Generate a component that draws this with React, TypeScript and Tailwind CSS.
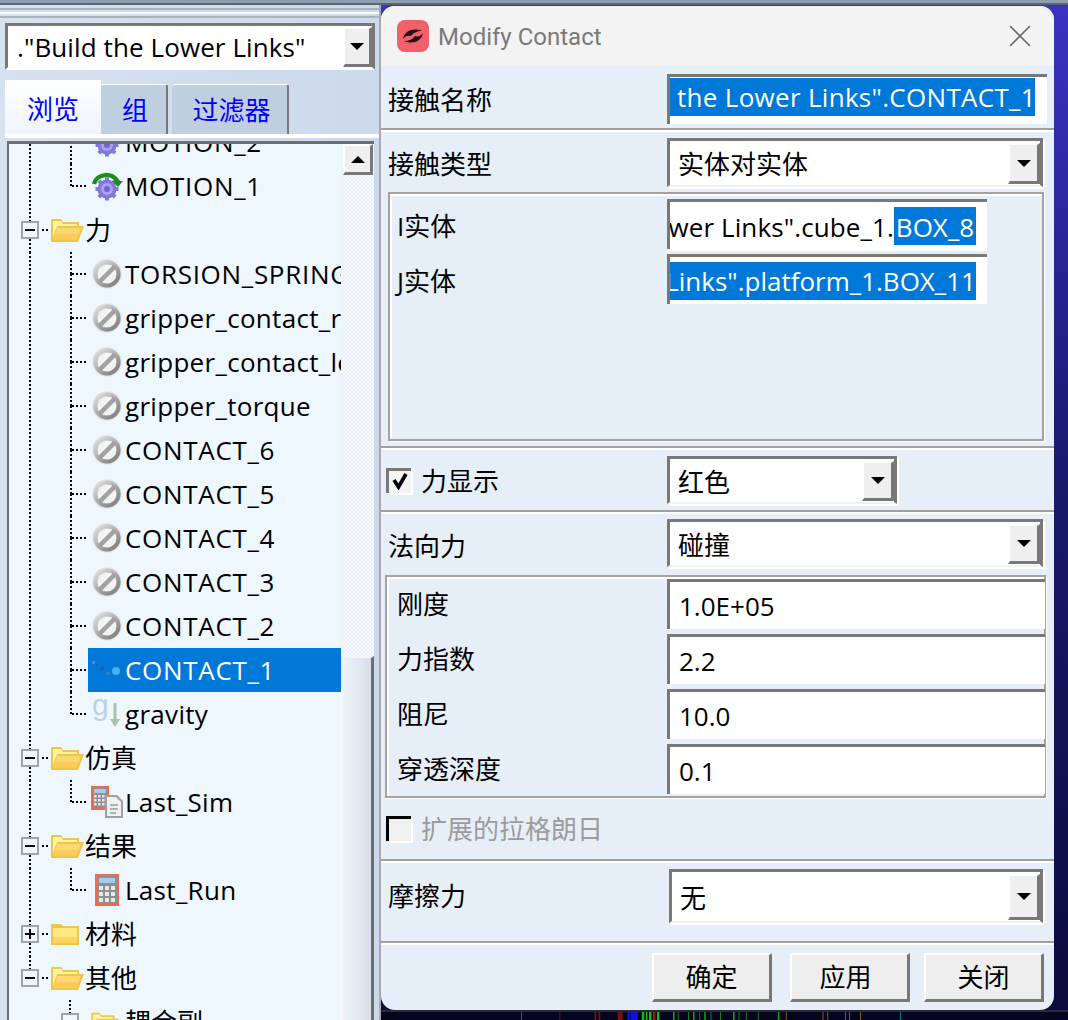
import React from "react";

const DOTS_V = "w-[2px] bg-[repeating-linear-gradient(to_bottom,#000_0_2px,transparent_2px_4px)]";
const DOTS_H = "h-[2px] bg-[repeating-linear-gradient(to_right,#000_0_2px,transparent_2px_4px)]";

function NoIcon() {
  return (
    <svg width="32" height="32" viewBox="0 0 32 32" className="shrink-0">
      <defs>
        <linearGradient id="noG" x1="0.15" y1="0.1" x2="0.85" y2="0.9">
          <stop offset="0" stopColor="#dcdcdc" />
          <stop offset="0.5" stopColor="#ababab" />
          <stop offset="1" stopColor="#7e7e7e" />
        </linearGradient>
        <radialGradient id="noS" cx="0.5" cy="0.5" r="0.5">
          <stop offset="0.8" stopColor="#c8c8c8" />
          <stop offset="1" stopColor="#eff7fe" stopOpacity="0.2" />
        </radialGradient>
      </defs>
      <circle cx="16" cy="16" r="16" fill="url(#noS)" />
      <circle cx="16" cy="16" r="13.5" fill="url(#noG)" />
      <circle cx="16" cy="16" r="9.5" fill="#f2f2f2" />
      <path d="M8.5 23.5 L23.5 8.5" stroke="#a2a2a2" strokeWidth="5" />
      <path d="M7.5 20.5 L20.5 7.5" stroke="#ffffff" strokeWidth="1.2" />
    </svg>
  );
}

function GearIcon({ arc }: { arc?: boolean }) {
  const teeth = [0, 45, 90, 135];
  return (
    <svg width="32" height="30" viewBox="0 0 32 30" className="shrink-0">
      <g transform="translate(16 18)">
        {teeth.map((a) => (
          <rect key={a} x="-2" y="-11.5" width="4" height="23" fill="#8278d8" transform={`rotate(${a})`} />
        ))}
        <circle r="9.5" fill="#8278d8" />
        <circle r="6" fill="#a9a2ea" />
        <circle r="3" fill="#6f65c8" />
      </g>
      {arc && (
        <>
          <path d="M3 13 C6 2 22 1 27 11" fill="none" stroke="#1f8c1f" strokeWidth="4.5" />
          <path d="M21 10 L32 10 L27 16 Z" fill="#1f8c1f" />
        </>
      )}
    </svg>
  );
}

function OpenFolder({ small }: { small?: boolean }) {
  return (
    <svg width={small ? 28 : 33} height={small ? 20 : 24} viewBox="0 0 33 24" className="shrink-0">
      <path d="M0 2 L0 24 L27 24 L33 8 L28 8 L28 4 L12 4 L10 1 L1 1 Z" fill="#eec645" />
      <path d="M2 3 L10 3 L12 6 L26 6 L26 8 L6 8 L2 20 Z" fill="#fff3a6" />
      <path d="M6 10 L30 10 L25 22 L3 22 Z" fill="#fbd970" />
      <path d="M5 16 L27 16 L25 22 L3 22 Z" fill="#fdc95a" />
    </svg>
  );
}

function ClosedFolder() {
  return (
    <svg width="28" height="22" viewBox="0 0 28 22" className="shrink-0">
      <path d="M0 1 L10 1 L12 3 L28 3 L28 22 L0 22 Z" fill="#eec645" />
      <rect x="2" y="5" width="24" height="15" fill="#fde884" />
      <rect x="2" y="14" width="24" height="6" fill="#fbd55c" />
    </svg>
  );
}

function CalcIcon() {
  const cells = [0, 1, 2];
  return (
    <svg width="24" height="32" viewBox="0 0 24 32" className="shrink-0">
      <rect width="24" height="32" fill="#ee6a4a" />
      <rect x="2" y="2" width="20" height="28" fill="#8f8f8f" />
      <rect x="4" y="4" width="16" height="5" fill="#a8c8ec" />
      {cells.map((r) =>
        cells.map((c) => <rect key={`${r}${c}`} x={4 + c * 6} y={12 + r * 6} width="4" height="4" fill="#e8e8e8" />)
      )}
    </svg>
  );
}

function SimIcon() {
  return (
    <svg width="32" height="32" viewBox="0 0 32 32" className="shrink-0">
      <rect x="0" y="0" width="18" height="24" fill="#ee6a4a" />
      <rect x="2" y="2" width="14" height="20" fill="#8f8f8f" />
      <rect x="3" y="3" width="12" height="4" fill="#a8c8ec" />
      {[0, 1, 2].map((r) =>
        [0, 1, 2].map((c) => <rect key={`${r}${c}`} x={3 + c * 4} y={9 + r * 4} width="2.5" height="2.5" fill="#e8e8e8" />)
      )}
      <path d="M14 9 L26 9 L32 15 L32 32 L14 32 Z" fill="#a0a0a0" />
      <path d="M16 11 L25 11 L30 16 L30 30 L16 30 Z" fill="#f0f0f0" />
      <path d="M19 19 H27 M19 23 H27 M19 27 H25" stroke="#9a9a9a" strokeWidth="1.6" />
    </svg>
  );
}

function GravityIcon() {
  return (
    <svg width="32" height="32" viewBox="0 0 32 32" className="shrink-0">
      <text x="1" y="17" fontSize="30" fontFamily="Liberation Sans" fill="#b8d2e6">g</text>
      <path d="M24 5 V27" stroke="#a8c4a8" strokeWidth="3" />
      <path d="M19 21 L24 29 L29 21 Z" fill="#a8c4a8" />
    </svg>
  );
}

function ContactIcon() {
  return (
    <svg width="30" height="26" viewBox="0 0 30 26" className="shrink-0">
      <rect x="1" y="4" width="3" height="3" fill="#4a8ed8" />
      <rect x="5" y="7" width="2" height="2" fill="#2a5aa8" />
      <rect x="9" y="10" width="4" height="3" fill="#2a5aa8" />
      <rect x="15" y="15" width="4" height="3" fill="#3a78c8" />
      <circle cx="25" cy="14" r="4" fill="#4ab0ee" />
      <rect x="24" y="6" width="5" height="2" fill="#2a6ab8" />
      <rect x="24" y="20" width="5" height="3" fill="#2a6ab8" />
    </svg>
  );
}

function Guide1({ half }: { half?: boolean }) {
  return (
    <div className="w-[41px] h-full shrink-0 pl-[20px]">
      <div className={`${DOTS_V} ${half ? "h-1/2" : "h-full"}`} />
    </div>
  );
}

function Box({ minus, noBottom, noTop }: { minus?: boolean; noBottom?: boolean; noTop?: boolean }) {
  return (
    <div className="w-[18px] h-full shrink-0 flex flex-col items-center">
      <div className={`${noTop ? "" : DOTS_V} flex-1`} />
      <div className="w-[18px] h-[18px] border-2 border-[#a3a3a3] bg-[#eff7fe] flex items-center justify-center relative">
        <div className="w-[10px] h-[2px] bg-black" />
        {!minus && <div className="w-[2px] h-[10px] bg-black absolute" />}
      </div>
      <div className={`${noBottom ? "" : DOTS_V} flex-1`} />
    </div>
  );
}

function FolderRow({ label, closed, last }: { label: string; closed?: boolean; last?: boolean }) {
  return (
    <div className="h-[44px] flex items-center pl-[12px] shrink-0">
      <Box minus={!closed} noBottom={last} />
      <div className={`${DOTS_H} w-[6px] ml-[3px]`} />
      <div className="ml-[3px] w-[33px] flex shrink-0">{closed ? <ClosedFolder /> : <OpenFolder />}</div>
      <span className="ml-[1px]">{label}</span>
    </div>
  );
}

function LeafRow({
  label,
  icon,
  last,
  selected,
}: {
  label: string;
  icon: React.ReactNode;
  last?: boolean;
  selected?: boolean;
}) {
  const caps = label === label.toUpperCase();
  return (
    <div className="h-[44px] flex items-center shrink-0">
      <Guide1 />
      <div className="w-[20px] shrink-0" />
      <div className="w-[2px] h-full flex flex-col shrink-0">
        <div className={`${DOTS_V} h-1/2`} />
        {!last && <div className={`${DOTS_V} h-1/2`} />}
      </div>
      <div className={`${DOTS_H} w-[16px] shrink-0`} />
      <div
        className={`flex-1 min-w-0 h-full flex items-center overflow-hidden whitespace-nowrap pl-[3px] ${
          selected ? "bg-[#0078d7] text-white" : ""
        }`}
      >
        <div className="w-[34px] shrink-0 flex items-center justify-start">{icon}</div>
        <span className={caps ? "tracking-[0.7px]" : "tracking-[0.3px]"}>{label}</span>
      </div>
    </div>
  );
}

function ArrowBtn({ className }: { className: string }) {
  return (
    <div
      className={`bg-[#efefef] border-t-2 border-l-2 border-white border-b-[3px] border-r-[3px] border-b-[#787878] border-r-[#787878] flex items-center justify-center shrink-0 ${className}`}
    >
      <div className="w-0 h-0 border-l-[7px] border-r-[7px] border-t-[7px] border-l-transparent border-r-transparent border-t-black" />
    </div>
  );
}

function Combo({ value, width, height = 49 }: { value: string; width: number; height?: number }) {
  return (
    <div
      style={{ width, height }}
      className="bg-white border-t-[3px] border-l-[3px] border-r-[3px] border-b-[2px] border-t-[#787878] border-l-[#787878] border-r-[#787878] border-b-[#f2f2f2] flex shrink-0 shadow-[2px_2px_0_#fff]"
    >
      <span className="flex-1 pl-[8px] flex items-center pt-[2px]">{value}</span>
      <ArrowBtn className="w-[32px] mt-[2px] mb-[1px]" />
    </div>
  );
}

function Input({ width, children, className = "" }: { width: number; children: React.ReactNode; className?: string }) {
  return (
    <div
      style={{ width }}
      className={`h-[50px] bg-white border-t-[3px] border-l-[3px] border-t-[#787878] border-l-[#787878] shrink-0 overflow-hidden whitespace-nowrap ${className}`}
    >
      {children}
    </div>
  );
}

function Sep() {
  return (
    <div className="shrink-0">
      <div className="h-[2px] bg-[#a0a0a0]" />
      <div className="h-[2px] bg-white" />
    </div>
  );
}

function ParamRow({ label, value }: { label: string; value: string }) {
  return (
    <div className="flex items-center h-[50px] pl-[10px] shrink-0">
      <span className="w-[270px] shrink-0">{label}</span>
      <Input width={378} className="flex items-center pl-[9px]">
        {value}
      </Input>
    </div>
  );
}

function Btn({ label, className = "" }: { label: string; className?: string }) {
  return (
    <div
      className={`w-[120px] h-[49px] bg-[#eeeeee] border-t-2 border-l-2 border-white border-b-[3px] border-r-[3px] border-b-[#787878] border-r-[#787878] flex items-center justify-center shrink-0 ${className}`}
    >
      {label}
    </div>
  );
}

function Check({ on }: { on?: boolean }) {
  return (
    <div
      className={`w-[25px] h-[25px] border-t-[3px] border-l-[3px] shrink-0 flex items-center justify-center shadow-[2px_2px_0_#fff] ${
        on ? "bg-[#f4f4f4] border-[#787878]" : "bg-[#f0f0f0] border-black"
      }`}
    >
      {on && (
        <svg width="16" height="17" viewBox="0 0 16 17">
          <path d="M2 7 L6.5 14 L14 1" fill="none" stroke="#000" strokeWidth="3.6" />
        </svg>
      )}
    </div>
  );
}

export default function App() {
  const fragments: [number, number, string][] = [
    [469, 1, "#0a8f9f"], [517, 1, "#8a1010"], [561, 2, "#7a1010"], [566, 2, "#7a1010"], [590, 4, "#7a1010"], [594, 2, "#7a1010"],
    [602, 3, "#1010e0"], [606, 9, "#1010e0"], [620, 3, "#10c010"], [625, 2, "#10c010"], [629, 3, "#10c010"], [634, 3, "#b01010"], [639, 3, "#10c010"], [659, 2, "#10a010"],
    [665, 1, "#10a010"], [678, 1, "#10a010"], [684, 2, "#10a010"], [692, 1, "#10a010"], [698, 2, "#10a010"], [706, 1, "#10a010"],
    [718, 1, "#10a010"], [734, 2, "#10a010"], [741, 1, "#10a010"], [750, 1, "#10a010"], [765, 1, "#10a010"], [790, 2, "#10a010"],
    [800, 1, "#a07010"], [846, 1, "#a07010"], [852, 1, "#a07010"], [874, 1, "#a07010"], [879, 1, "#a07010"], [893, 1, "#a07010"], [943, 1, "#0a8f9f"],
  ];
  return (
    <div className="w-[1068px] h-[1020px] overflow-hidden flex flex-col bg-black text-black text-[26px] leading-none [font-family:'Open_Sans','Noto_Sans_CJK_SC',sans-serif]">
      <div className="h-[5px] shrink-0 bg-[#8d9db2] border-b-2 border-b-[#5c6470]" />
      <div className="flex-1 min-h-0 flex">
        <aside className="w-[381px] shrink-0 h-full flex flex-col border-r-2 border-r-[#a9a9a9] bg-[linear-gradient(to_right,#d6e2f0,#cbd9ea)]">
          <div className="mt-[3px] h-[10px] flex flex-col justify-between shrink-0">
            <div className="h-[2px] bg-[#a9b2bd]" />
            <div className="h-[2px] bg-white" />
            <div className="h-[2px] bg-[#a9b2bd]" />
          </div>
          <div className="mt-[5px] ml-[5px] w-[370px] h-[47px] shrink-0 bg-white border-[3px] border-[#787878] border-b-white flex">
            <span className="flex-1 pl-[9px] flex items-center whitespace-nowrap tracking-[0.1px]">."Build the Lower Links"</span>
            <ArrowBtn className="w-[29px] mt-[1px] mb-[0px]" />
          </div>
          <div className="mt-[10px] ml-[5px] h-[54px] flex shrink-0 text-[#0000ff]">
            <div className="w-[96px] h-full bg-[linear-gradient(to_bottom,#ffffff,#edf4fc)] flex items-center justify-center pt-[3px]">浏览</div>
            <div className="w-[67px] mt-[4px] bg-[#c0cfe0] border-t border-t-white border-r-[2px] border-r-[#787878] rounded-tr-[3px] flex items-center justify-center pl-[3px]">组</div>
            <div className="w-[117px] mt-[4px] ml-[4px] bg-[#c0cfe0] border-t border-t-white border-r-[2px] border-r-[#787878] rounded-t-[3px] flex items-center justify-center pl-[4px]">过滤器</div>
          </div>
          <div className="h-[4px] ml-[5px] bg-white shrink-0" />
          <div className="mt-[3px] ml-[7px] mr-[5px] flex-1 min-h-0 flex border-t-[3px] border-l-[2px] border-[#6e6e6e] bg-[#eff7fe]">
            <div className="w-[332px] h-full overflow-hidden shrink-0">
              <div className="-mt-[24px] flex flex-col">
                <LeafRow label="MOTION_2" icon={<GearIcon />} />
                <LeafRow label="MOTION_1" icon={<GearIcon arc />} last />
                <FolderRow label="力" />
                <LeafRow label="TORSION_SPRING" icon={<NoIcon />} />
                <LeafRow label="gripper_contact_right" icon={<NoIcon />} />
                <LeafRow label="gripper_contact_left" icon={<NoIcon />} />
                <LeafRow label="gripper_torque" icon={<NoIcon />} />
                <LeafRow label="CONTACT_6" icon={<NoIcon />} />
                <LeafRow label="CONTACT_5" icon={<NoIcon />} />
                <LeafRow label="CONTACT_4" icon={<NoIcon />} />
                <LeafRow label="CONTACT_3" icon={<NoIcon />} />
                <LeafRow label="CONTACT_2" icon={<NoIcon />} />
                <LeafRow label="CONTACT_1" icon={<ContactIcon />} selected />
                <LeafRow label="gravity" icon={<GravityIcon />} last />
                <FolderRow label="仿真" />
                <LeafRow label="Last_Sim" icon={<SimIcon />} last />
                <FolderRow label="结果" />
                <LeafRow label="Last_Run" icon={<div className="pl-[4px] flex"><CalcIcon /></div>} last />
                <FolderRow label="材料" closed />
                <FolderRow label="其他" last />
                <div className="h-[44px] flex items-center shrink-0">
                  <div className="w-[52px] shrink-0" />
                  <Box minus noBottom />
                  <div className="ml-[12px] flex"><OpenFolder small /></div>
                  <span className="ml-[6px]">耦合副</span>
                </div>
              </div>
            </div>
            <div className="w-[33px] h-full flex flex-col shrink-0">
              <div className="h-[33px] pl-[2px] flex shrink-0 bg-[#eff7fe]">
                <div className="w-[30px] h-[31px] bg-[#efefef] border-t-2 border-l-2 border-white border-b-[3px] border-r-[3px] border-b-[#787878] border-r-[#787878] flex items-center justify-center">
                  <div className="w-0 h-0 border-l-[7px] border-r-[7px] border-b-[7px] border-l-transparent border-r-transparent border-b-black" />
                </div>
              </div>
              <div className="h-[479px] shrink-0 bg-[repeating-conic-gradient(#f6fafd_0_25%,#e8eff6_0_50%)] bg-[length:4px_4px]" />
              <div className="flex-1 min-h-0 border-t-2 border-t-[#f6f6f6] border-l-2 border-l-[#f6f6f6] bg-[linear-gradient(to_right,#eef3fa,#d6dfea)] border-r-[3px] border-r-[#6e6e6e]" />
            </div>
          </div>
        </aside>
        <main className="flex-1 min-w-0 h-full flex flex-col bg-[linear-gradient(to_bottom,#3a33c4,#1a1a70_45%,#0b0b3c)]">
          <div className="mt-[1px] w-[673px] h-[1004px] shrink-0 rounded-[14px] overflow-hidden bg-[#e6eef8] flex flex-col">
            <div className="h-[60px] shrink-0 bg-[#f3f3f3] flex items-center pl-[16px] pr-[22px]">
              <svg width="32" height="32" viewBox="0 0 32 32" className="shrink-0">
                <rect width="32" height="32" rx="8" fill="#f2606a" />
                <path d="M6 19 C8 9 18 8 25 11 C20 11 16 13 14 16 C11 15 8 16 6 19 Z" fill="#201414" />
                <path d="M26 13 C24 23 14 24 7 21 C12 21 16 19 18 16 C21 17 24 16 26 13 Z" fill="#201414" />
              </svg>
              <span className="ml-[9px] text-[#7a7a7a] text-[24px] pt-[2px] [font-family:Roboto,sans-serif]">Modify Contact</span>
              <svg width="24" height="24" viewBox="0 0 24 24" className="ml-auto shrink-0">
                <path d="M2 2 L22 22 M22 2 L2 22" stroke="#6a6a6a" strokeWidth="1.6" />
              </svg>
            </div>
            <div className="h-[62px] shrink-0 pl-[7px] pt-[8px] flex items-start">
              <span className="w-[279px] shrink-0 h-[50px] flex items-center pt-[2px]">接触名称</span>
              <Input width={380}>
                <div className="mt-[1px] w-[365px] h-[38px] bg-[#0078d7] text-white flex items-center pl-[7px] tracking-[0.3px]">the Lower Links".CONTACT_1</div>
              </Input>
            </div>
            <Sep />
            <div className="h-[60px] shrink-0 pl-[7px] pt-[6px] flex items-start">
              <span className="w-[279px] shrink-0 h-[49px] flex items-center pt-[2px]">接触类型</span>
              <Combo value="实体对实体" width={376} />
            </div>
            <div className="ml-[7px] w-[656px] h-[249px] shrink-0 border-2 border-[#a3a3a3] shadow-[inset_2px_2px_0_#fff,1px_1px_0_#fff] pt-[6px] pl-[7px]">
              <div className="flex items-center h-[48px]">
                <span className="w-[270px] shrink-0 pt-[3px]">I实体</span>
                <Input width={320} className="h-[48px] shadow-[0_2px_0_#fff]">
                  <div className="w-[306px] h-full flex justify-end items-center overflow-hidden">
                    <span className="whitespace-nowrap pt-[2px] tracking-[0.12px]">wer Links".cube_1.</span>
                    <span className="bg-[#0078d7] text-white h-[38px] flex items-center w-[82px] justify-center shrink-0 pt-[2px]">BOX_8</span>
                  </div>
                </Input>
              </div>
              <div className="flex items-center h-[50px] mt-[6px]">
                <span className="w-[270px] shrink-0 pt-[3px]">J实体</span>
                <Input width={320}>
                  <div className="w-[306px] mt-[5px] h-[38px] bg-[#0078d7] text-white flex justify-end items-center overflow-hidden">
                    <span className="whitespace-nowrap shrink-0">Links".platform_1.BOX_11</span>
                  </div>
                </Input>
              </div>
            </div>
            <div className="h-[5px] shrink-0" />
            <Sep />
            <div className="h-[60px] shrink-0 pl-[5px] flex items-center">
              <Check on />
              <span className="w-[256px] pl-[10px] shrink-0 pt-[2px]">力显示</span>
              <Combo value="红色" width={230} height={48} />
            </div>
            <Sep />
            <div className="h-[61px] shrink-0 pl-[7px] pt-[5px] flex items-start">
              <span className="w-[279px] shrink-0 h-[52px] flex items-center pt-[2px]">法向力</span>
              <Combo value="碰撞" width={376} height={48} />
            </div>
            <div className="ml-[4px] w-[661px] h-[223px] shrink-0 border-2 border-[#a3a3a3] shadow-[inset_2px_2px_0_#fff,1px_1px_0_#fff] pt-[2px] flex flex-col gap-[5px]">
              <ParamRow label="刚度" value="1.0E+05" />
              <ParamRow label="力指数" value="2.2" />
              <ParamRow label="阻尼" value="10.0" />
              <ParamRow label="穿透深度" value="0.1" />
            </div>
            <div className="h-[61px] shrink-0 pl-[5px] flex items-center text-[#9c9c9c]">
              <Check />
              <span className="pl-[10px]">扩展的拉格朗日</span>
            </div>
            <Sep />
            <div className="h-[78px] shrink-0 pl-[7px] pt-[6px] flex items-start">
              <span className="w-[281px] shrink-0 h-[54px] flex items-center">摩擦力</span>
              <Combo value="无" width={374} height={54} />
            </div>
            <Sep />
            <div className="flex-1 min-h-0 flex items-start pt-[8px] pl-[271px]">
              <Btn label="确定" />
              <div className="w-[18px] shrink-0" />
              <Btn label="应用" className="pr-[8px]" />
              <div className="w-[14px] shrink-0" />
              <Btn label="关闭" />
            </div>
          </div>
          <svg width="688" height="10" viewBox="380 0 688 10" className="shrink-0 bg-[#05051e] border-t-2 border-t-[#2a2a3a]">
            {fragments.map(([x, w, c], i) => (
              <rect key={i} x={x} y="0" width={w} height="10" fill={c} />
            ))}
          </svg>
        </main>
      </div>
    </div>
  );
}
